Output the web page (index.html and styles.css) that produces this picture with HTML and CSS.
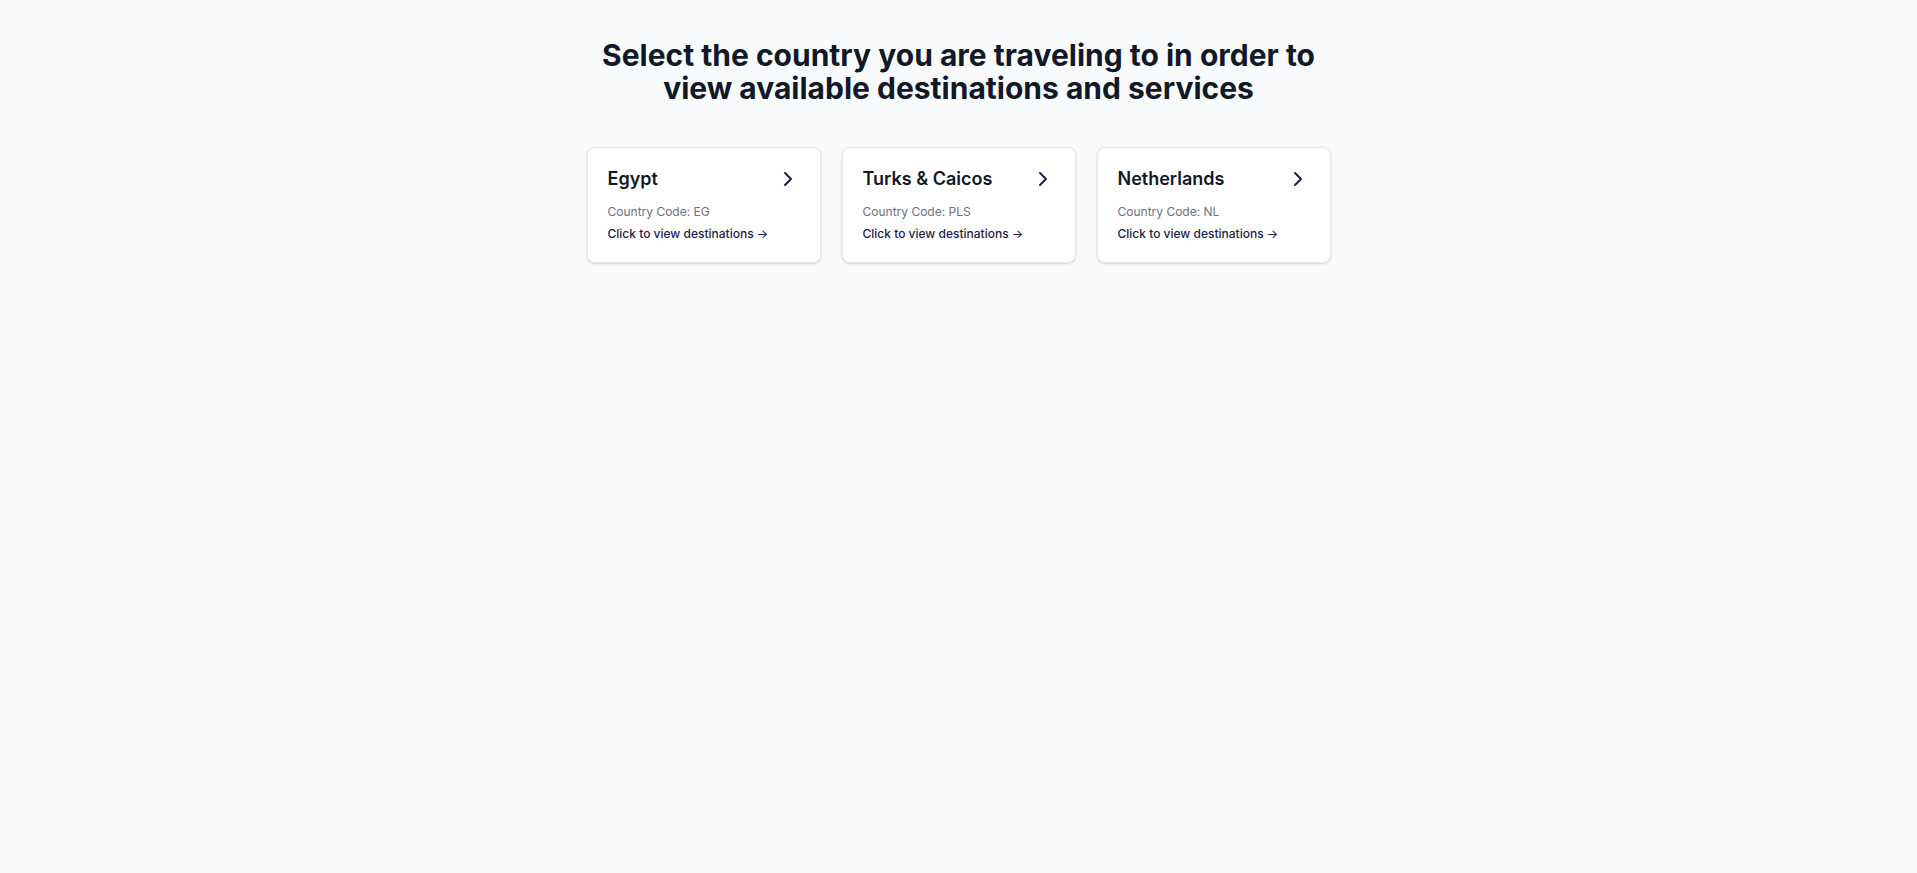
FILE: index.html
```html
<!DOCTYPE html>
<html lang="en">
<head>
<meta charset="utf-8">
<title>Select country</title>
<link rel="stylesheet" href="styles.css">
</head>
<body>
<main class="page">
  <h1 class="title">Select the country you are traveling to in order to<br>view available destinations and services</h1>
  <div class="grid">
    <a class="card" href="#">
      <div class="card-head">
        <span class="card-name">Egypt</span>
        <svg class="chev" viewBox="0 0 24 24" width="24" height="24" fill="none" stroke="currentColor" stroke-width="2" stroke-linecap="round" stroke-linejoin="round"><path d="m9 18 6-6-6-6"/></svg>
      </div>
      <p class="card-code">Country Code: EG</p>
      <p class="card-link">Click to view destinations →</p>
    </a>
    <a class="card" href="#">
      <div class="card-head">
        <span class="card-name">Turks &amp; Caicos</span>
        <svg class="chev" viewBox="0 0 24 24" width="24" height="24" fill="none" stroke="currentColor" stroke-width="2" stroke-linecap="round" stroke-linejoin="round"><path d="m9 18 6-6-6-6"/></svg>
      </div>
      <p class="card-code">Country Code: PLS</p>
      <p class="card-link">Click to view destinations →</p>
    </a>
    <a class="card" href="#">
      <div class="card-head">
        <span class="card-name">Netherlands</span>
        <svg class="chev" viewBox="0 0 24 24" width="24" height="24" fill="none" stroke="currentColor" stroke-width="2" stroke-linecap="round" stroke-linejoin="round"><path d="m9 18 6-6-6-6"/></svg>
      </div>
      <p class="card-code">Country Code: NL</p>
      <p class="card-link">Click to view destinations →</p>
    </a>
  </div>
</main>
</body>
</html>
```
FILE: styles.css
```css
* { box-sizing: border-box; }
html, body { margin: 0; padding: 0; }
body {
  background: #f8fafc;
  font-family: Inter, "Noto Sans", "DejaVu Sans", sans-serif;
  color: #111827;
  min-height: 873px;
}
.page {
  display: flex;
  flex-direction: column;
  align-items: center;
  padding-top: 39px;
}
.title {
  margin: 0 0 42px;
  font-size: 30px;
  line-height: 33px;
  font-weight: 700;
  text-align: center;
  color: #111827;
  letter-spacing: 0;
}
.grid {
  display: grid;
  grid-template-columns: repeat(3, 234px);
  gap: 21px;
}
.card {
  display: block;
  background: #fff;
  border: 1px solid #e5e7eb;
  border-radius: 8px;
  box-shadow: 0 1px 3px rgba(0,0,0,0.10), 0 1px 2px rgba(0,0,0,0.06);
  padding: 19px 20px 20px;
  text-decoration: none;
  color: inherit;
}
.card-head {
  display: flex;
  justify-content: space-between;
  align-items: center;
  height: 24px;
  margin-bottom: 13px;
}
.card-name {
  font-size: 18px;
  line-height: 24px;
  font-weight: 600;
  color: #111827;
}
.chev { color: #1e1b4b; display: block; }
.card-code {
  margin: 0 0 6px;
  font-size: 12px;
  line-height: 16px;
  color: #6b7280;
}
.card-link {
  margin: 0;
  font-size: 12px;
  line-height: 16px;
  font-weight: 500;
  color: #1e1b4b;
}
```
